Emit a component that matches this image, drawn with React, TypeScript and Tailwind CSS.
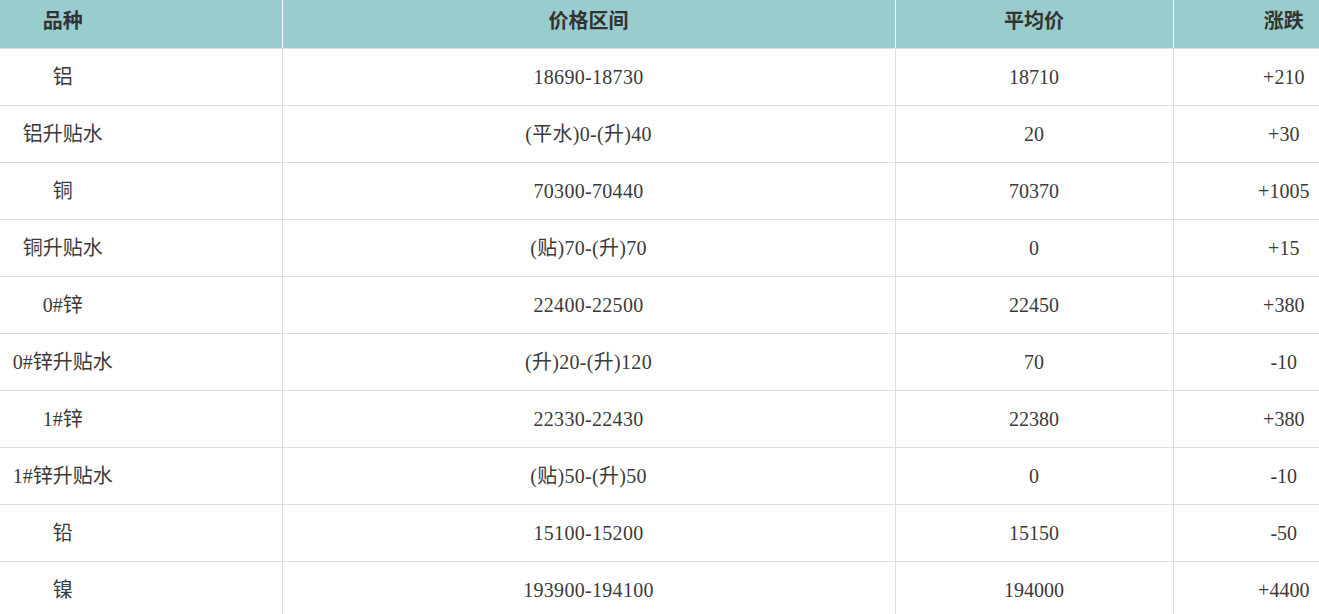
const rows = [
  { name: "铝", range: "18690-18730", avg: "18710", change: "+210" },
  { name: "铝升贴水", range: "(平水)0-(升)40", avg: "20", change: "+30" },
  { name: "铜", range: "70300-70440", avg: "70370", change: "+1005" },
  { name: "铜升贴水", range: "(贴)70-(升)70", avg: "0", change: "+15" },
  { name: "0#锌", range: "22400-22500", avg: "22450", change: "+380" },
  { name: "0#锌升贴水", range: "(升)20-(升)120", avg: "70", change: "-10" },
  { name: "1#锌", range: "22330-22430", avg: "22380", change: "+380" },
  { name: "1#锌升贴水", range: "(贴)50-(升)50", avg: "0", change: "-10" },
  { name: "铅", range: "15100-15200", avg: "15150", change: "-50" },
  { name: "镍", range: "193900-194100", avg: "194000", change: "+4400" },
];

export default function App() {
  return (
    <div
      className="w-[1319px] h-[614px] overflow-hidden bg-white text-[#3a3a3a] text-[20px]"
      style={{ fontFamily: '"Liberation Serif", "Noto Sans CJK SC", serif' }}
    >
      <table className="-ml-[156px] w-[1550px] table-fixed border-collapse">
        <colgroup>
          <col className="w-[438px]" />
          <col className="w-[613px]" />
          <col className="w-[278px]" />
          <col className="w-[221px]" />
        </colgroup>
        <thead>
          <tr className="h-[48px] bg-[#99cccc] text-[#333]">
            <th className="border-b border-b-[#dddddd] border-r border-r-white font-bold text-center pb-[6px]">品种</th>
            <th className="border-b border-b-[#dddddd] border-r border-r-white font-bold text-center pb-[6px]">价格区间</th>
            <th className="border-b border-b-[#dddddd] border-r border-r-white font-bold text-center pb-[6px]">平均价</th>
            <th className="border-b border-b-[#dddddd] font-bold text-center pb-[6px]">涨跌</th>
          </tr>
        </thead>
        <tbody>
          {rows.map((r, i) => (
            <tr key={i} className="h-[57px]">
              <td className="border-b border-r border-[#dddddd] text-center">{r.name}</td>
              <td className="border-b border-r border-[#dddddd] text-center tracking-[0.3px]">{r.range}</td>
              <td className="border-b border-r border-[#dddddd] text-center">{r.avg}</td>
              <td className="border-b border-[#dddddd] text-center">{r.change}</td>
            </tr>
          ))}
        </tbody>
      </table>
    </div>
  );
}
